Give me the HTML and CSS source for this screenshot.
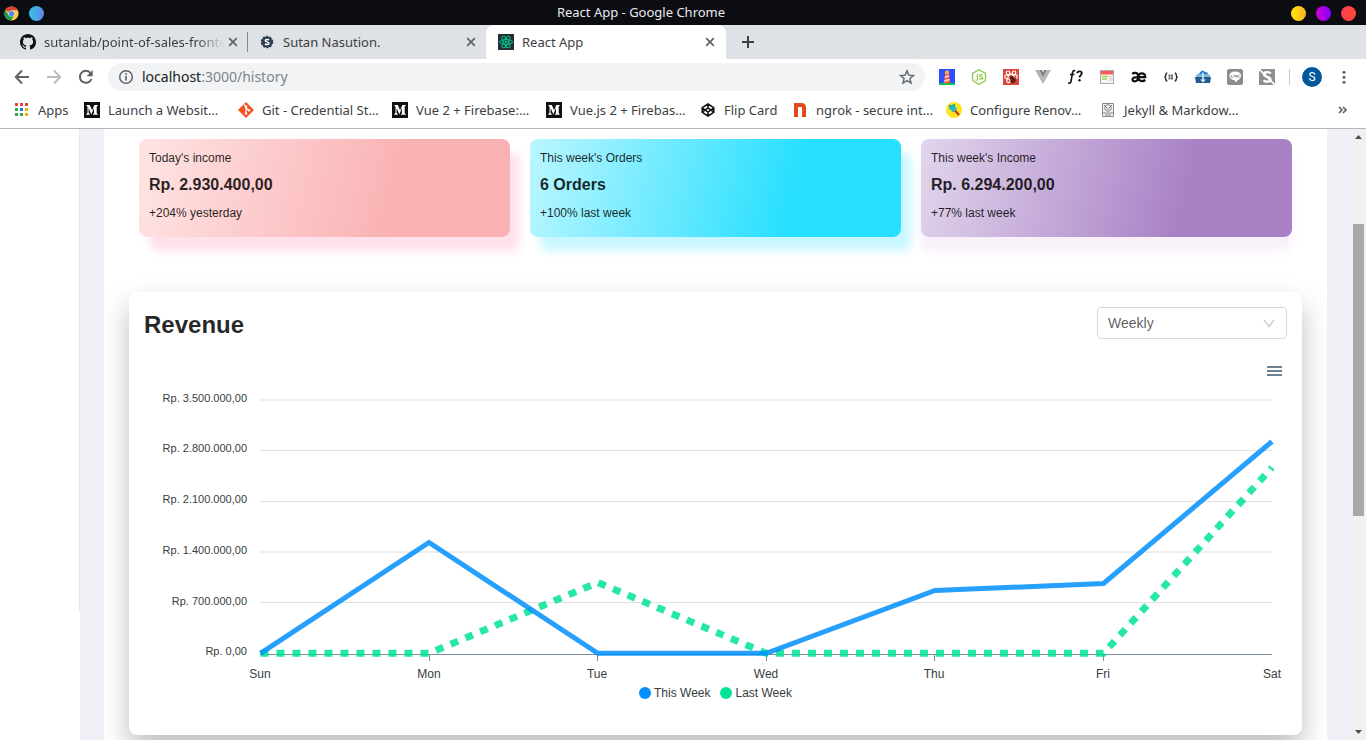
FILE: index.html
```html
<!DOCTYPE html>
<html lang="en">
<head>
<meta charset="utf-8">
<title>React App</title>
<link rel="stylesheet" href="styles.css">
</head>
<body>
<svg width="0" height="0" class="defs" aria-hidden="true">
  <defs>
    <symbol id="close" viewBox="0 0 10 10"><path d="M1.2 1.2l7.6 7.6M8.8 1.2L1.2 8.8" stroke="#5f6368" stroke-width="1.7"/></symbol>
    <symbol id="medium" viewBox="0 0 16 16"><rect width="16" height="16" fill="#111"/><path d="M2.500 3h3.300l2.300 5.200L10.400 3h3.300v.8l-1 .7v6.700l1 .8v.8H9v-.8l1-.8V6l-2.600 6.600L4.600 6v4.700l1.200 1.500v.6H2.300v-.6l1.200-1.500V4.800l-1-1z" fill="#fff"/></symbol>
  </defs>
</svg>

<header class="titlebar">
  <div class="title-side">
    <svg width="15" height="15" viewBox="0 0 16 16"><circle cx="8" cy="8" r="7.500" fill="#ffcd40"/><path d="M8 8L1.500 4.200A7.500 7.500 0 0 1 14.500 4.500H8z" fill="#de4032"/><path d="M1.500 4.200A7.500 7.500 0 0 0 7.500 15.500L11 9.700 5 9.800z" fill="#1a9c57"/><circle cx="8" cy="8" r="3.300" fill="#dfe9fb"/><circle cx="8" cy="8" r="2.800" fill="#4a8af4"/></svg>
    <span class="dot dot-blue"></span>
  </div>
  <div class="title-text">React App - Google Chrome</div>
  <div class="title-side title-right">
    <span class="dot dot-yellow"></span><span class="dot dot-purple"></span><span class="dot dot-red"></span>
  </div>
</header>

<nav class="tabs" aria-label="Tabs">
  <div class="tab">
    <svg width="16" height="16" viewBox="0 0 16 16"><path fill="#111" fill-rule="evenodd" d="M8 0C3.580 0 0 3.580 0 8c0 3.540 2.290 6.530 5.470 7.590.4.070.55-.17.55-.38 0-.19-.01-.82-.01-1.490-2.010.37-2.530-.49-2.690-.94-.09-.23-.48-.94-.82-1.130-.28-.15-.68-.52-.01-.53.63-.01 1.080.58 1.230.82.72 1.210 1.870.87 2.330.66.07-.52.28-.87.51-1.070-1.780-.2-3.640-.89-3.640-3.950 0-.87.31-1.590.82-2.150-.08-.2-.36-1.020.08-2.120 0 0 .67-.21 2.200.82.64-.18 1.320-.27 2-.27s1.360.09 2 .27c1.530-1.040 2.200-.82 2.200-.82.44 1.100.16 1.920.08 2.120.51.56.82 1.270.82 2.150 0 3.070-1.870 3.750-3.650 3.950.29.25.54.73.54 1.480 0 1.070-.01 1.930-.01 2.200 0 .21.15.46.55.38A8.010 8.010 0 0 0 16 8c0-4.420-3.580-8-8-8z"/></svg>
    <span class="tab-label fade">sutanlab/point-of-sales-fronte</span>
    <button class="tab-close" aria-label="Close tab"><svg width="10" height="10"><use href="#close"/></svg></button>
  </div>
  <div class="tab tab-second">
    <svg width="16" height="16" viewBox="0 0 16 16"><circle cx="8" cy="8" r="5.600" fill="#2c3e50"/><circle cx="8" cy="8" r="5.500" fill="none" stroke="#2c3e50" stroke-width="1.500" stroke-dasharray="2 1.500"/><path d="M10 6C9.200 5.200 6.300 5.100 6.300 6.600S10 7.700 10 9.300 7 10.900 5.900 9.900" fill="none" stroke="#fff" stroke-width="1.500"/></svg>
    <span class="tab-label">Sutan Nasution.</span>
    <button class="tab-close" aria-label="Close tab"><svg width="10" height="10"><use href="#close"/></svg></button>
  </div>
  <div class="tab tab-active">
    <svg width="16" height="16" viewBox="0 0 16 16"><rect width="16" height="16" fill="#272c35"/><g fill="none" stroke="#00c58e"><ellipse cx="8" cy="8" rx="6.500" ry="2.500"/><ellipse cx="8" cy="8" rx="6.500" ry="2.500" transform="rotate(60 8 8)"/><ellipse cx="8" cy="8" rx="6.500" ry="2.500" transform="rotate(120 8 8)"/></g><circle cx="8" cy="8" r="1.300" fill="#00c58e"/></svg>
    <span class="tab-label">React App</span>
    <button class="tab-close" aria-label="Close tab"><svg width="10" height="10"><use href="#close"/></svg></button>
  </div>
  <button class="new-tab" aria-label="New tab"><svg width="12" height="12" viewBox="0 0 12 12"><path d="M6 0v12M0 6h12" stroke="#3c4043" stroke-width="2"/></svg></button>
</nav>

<div class="toolbar">
  <button class="icon-btn" aria-label="Back"><svg width="16" height="16" viewBox="0 0 16 16"><path d="M15 8H2M8 1.500L1.800 8 8 14.500" fill="none" stroke="#5f6368" stroke-width="2"/></svg></button>
  <button class="icon-btn" aria-label="Forward"><svg width="16" height="16" viewBox="0 0 16 16"><path d="M1 8h13M8 1.500L14.200 8 8 14.500" fill="none" stroke="#babcbe" stroke-width="2"/></svg></button>
  <button class="icon-btn" aria-label="Reload"><svg width="16" height="16" viewBox="0 0 16 16"><path d="M13.500 10A6 6 0 1 1 12.600 4.100" fill="none" stroke="#5f6368" stroke-width="2"/><path d="M14.700 1v6.200H8.500z" fill="#5f6368"/></svg></button>
  <div class="omnibox">
    <svg width="16" height="16" viewBox="0 0 16 16"><circle cx="8" cy="8" r="6.300" fill="none" stroke="#5f6368" stroke-width="1.500"/><path d="M8 7v4.500M8 4.300V6" stroke="#5f6368" stroke-width="1.700"/></svg>
    <span class="url">localhost<span class="url-path">:3000/history</span></span>
    <button aria-label="Bookmark this page"><svg width="16" height="16" viewBox="0 0 16 16"><path d="M8 1.800l1.800 4.300 4.700.4-3.600 3 1.100 4.600-4-2.500-4 2.500 1.100-4.600-3.600-3 4.700-.4z" fill="none" stroke="#5f6368" stroke-width="1.400"/></svg></button>
  </div>
  <div class="extensions">
    <svg width="16" height="16" viewBox="0 0 16 16"><rect width="16" height="16" fill="#304ffe"/><path d="M0 14.500c5-1.500 11-1.500 16 0V16H0z" fill="#00c853"/><path d="M6 5h4l1 9.300H5z" fill="#ff5a3c"/><path d="M6 7l4-1v2L5.700 9zM5.500 11l5-1.300v1.800l-5.300 1.500z" fill="#ffd0c0"/><path d="M6 2.500L8 1l2 1.500V5H6z" fill="#ffab40"/></svg>
    <svg width="16" height="16" viewBox="0 0 16 16"><path d="M8 .8l6.500 3.700v7.200L8 15.300l-6.500-3.600V4.500z" fill="none" stroke="#8cc84b" stroke-width="1.300"/><path d="M6.500 5v5.200c0 1.200-1.500 1.400-2 .5M11.600 6.200c-.8-.8-3-.6-3 .6 0 1.500 3.200.6 3.200 2.200 0 1.300-2.600 1.400-3.400.3" fill="none" stroke="#8cc84b" stroke-width="1.200"/></svg>
    <svg width="16" height="16" viewBox="0 0 16 16"><rect width="16" height="16" fill="#db4437"/><g fill="none" stroke="#fff" stroke-width="1.200"><circle cx="5" cy="3.800" r="1.800"/><circle cx="11" cy="3.800" r="1.800"/><circle cx="3.500" cy="7.800" r="1.800"/><circle cx="12.500" cy="7.500" r="1.800"/><circle cx="5.500" cy="11.800" r="1.800"/><path d="M5.500 7c1-2.500 4-2.500 5 0"/></g><path d="M7 8.500l2.500-1.500 3.500 2.500-1 4-4 .5z" fill="#3a1712"/><path d="M8 10l3.500 3M10 8l2.500 3" stroke="#db4437" stroke-width=".7"/></svg>
    <svg width="16" height="16" viewBox="0 0 16 16"><path d="M0 1h4l4 7 4-7h4L8 15z" fill="#b4b4b4"/><path d="M4 1h2.800L8 3.200 9.200 1H12L8 8z" fill="#808080"/></svg>
    <svg width="16" height="16" viewBox="0 0 16 16"><path d="M8.200 1.800c-2-.8-2.600 1-3 3.400l-1 6.300c-.4 2.300-1.200 3-3 2.400M3 5.500h4.500" fill="none" stroke="#111" stroke-width="1.600"/><path d="M10.200 4.200c.2-2.500 4.600-2.600 4.600.1 0 2-2.300 2-2.300 4.200" fill="none" stroke="#111" stroke-width="1.800"/><circle cx="12.500" cy="11.200" r="1.200" fill="#111"/></svg>
    <svg width="16" height="16" viewBox="0 0 16 16"><rect x="1.500" y="1.500" width="13" height="13" fill="#f5f5f5" stroke="#aaa"/><path d="M2 2h12v3.500H2z" fill="#ff5a5f"/><path d="M3 7.500h6M3 10h5" stroke="#a4d63c" stroke-width="1.500"/><path d="M10 7h3.500v5H10z" fill="#ddd"/></svg>
    <svg width="16" height="16" viewBox="0 0 16 16"><path d="M1.200 4.800C3 3.300 7 3.200 7 6.500v3C7 12.500 1.500 13.500 1.500 10.500 1.500 8.500 4 8.200 7 8.200h7.300c.3-5-6.800-5-7 0 0 4.300 4.600 4.500 7 2.800" fill="none" stroke="#111" stroke-width="2.200"/></svg>
    <svg width="16" height="16" viewBox="0 0 16 16"><path d="M4.300 4c-1.500 0-1.500.5-1.500 1.800C2.800 7.200 2.600 7.800 1.500 8c1.100.2 1.300.8 1.300 2.200 0 1.300 0 1.800 1.500 1.800M11.700 4c1.500 0 1.500.5 1.500 1.800 0 1.400.2 2 1.300 2.200-1.100.2-1.300.8-1.300 2.200 0 1.300 0 1.800-1.500 1.800" fill="none" stroke="#222" stroke-width="1.400"/><path d="M5.500 6.200h5M5.500 8h5M5.500 9.800h5" stroke="#222" stroke-dasharray="2 .5"/></svg>
    <svg width="16" height="16" viewBox="0 0 16 16"><path d="M3 5.500L7 1.500l6 2.500v4H3z" fill="#1976d2"/><path d="M1 6l3-1.500 4 1 4-1L15 6v3H1z" fill="#7eb4dd"/><path d="M0 8h16l-1 6H1z" fill="#245b8f"/><path d="M7.200 3.500h1.600v7H11l-3 3-3-3h2.200z" fill="#d6ecfb"/></svg>
    <svg width="16" height="16" viewBox="0 0 16 16"><rect width="16" height="16" rx="2" fill="#8c8c8c"/><path d="M8 2.500c7.300 0 7.500 6 3 8.800L8 13.500v-2.200C.5 10.800 .5 2.500 8 2.500z" fill="#fff"/><path d="M4.300 6v2.300H6M7 5.800v2.500M8.300 8.300V6l1.500 2.300V5.800M12.500 6.100H11v2.200h1.500" fill="none" stroke="#8c8c8c" stroke-width=".8"/></svg>
    <svg width="16" height="16" viewBox="0 0 16 16"><rect width="16" height="16" fill="#8f8f91"/><path d="M11.800 4.500C10 2.500 5 2.800 5 5.500s6.500 2 6.500 4.700c0 3-5 3.200-7 1" fill="none" stroke="#fff" stroke-width="2.300"/><path d="M0 0l16 16" stroke="#fff" stroke-width="1.600"/></svg>
  </div>
  <span class="tool-divider"></span>
  <button class="avatar" aria-label="Profile">S</button>
  <button class="menu" aria-label="Menu"><svg width="16" height="16" viewBox="0 0 16 16" fill="#5f6368"><circle cx="8" cy="3.200" r="1.500"/><circle cx="8" cy="8.200" r="1.500"/><circle cx="8" cy="13.200" r="1.500"/></svg></button>
</div>

<nav class="bookmarks" aria-label="Bookmarks">
  <a href="#" class="bm bm-apps"><svg width="16" height="16" viewBox="0 0 16 16"><path d="M1 1h3v3H1zM6 1h3v3H6zM11 1h3v3h-3z" fill="#ea4335"/><path d="M1 6h3v3H1zM1 11h3v3H1zM6 11h3v3H6z" fill="#34a853"/><path d="M6 6h3v3H6z" fill="#1a73e8"/><path d="M11 6h3v3h-3zM11 11h3v3h-3z" fill="#fbaa05"/></svg>Apps</a>
  <a href="#" class="bm"><svg width="16" height="16"><use href="#medium"/></svg>Launch a Websit…</a>
  <a href="#" class="bm"><svg width="16" height="16" viewBox="0 0 16 16"><path d="M8 0l8 8-8 8-8-8z" fill="#f4511e"/><path d="M6 2.500l2 2v7M8 6l3 2.500" fill="none" stroke="#fff" stroke-width="1.200"/><circle cx="8" cy="4.800" r="1.300" fill="#fff"/><circle cx="8" cy="11.500" r="1.300" fill="#fff"/><circle cx="11" cy="8.300" r="1.300" fill="#fff"/></svg>Git - Credential St…</a>
  <a href="#" class="bm"><svg width="16" height="16"><use href="#medium"/></svg>Vue 2 + Firebase:…</a>
  <a href="#" class="bm"><svg width="16" height="16"><use href="#medium"/></svg>Vue.js 2 + Firebas…</a>
  <a href="#" class="bm bm-short"><svg width="16" height="16" viewBox="0 0 16 16"><path d="M8 2l5.800 3.700v4.600L8 14l-5.800-3.700V5.700zM8 2v4M8 10v4M2.200 5.800L8 10l5.800-4.200M2.200 10.200L8 6l5.800 4.200" fill="none" stroke="#111" stroke-width="1.500"/></svg>Flip Card</a>
  <a href="#" class="bm"><svg width="16" height="16" viewBox="0 0 16 16"><path d="M2 15V1h7.500C12.500 1 14 2.500 14 5.500V15h-4V5H6v10z" fill="#e04a1c"/></svg>ngrok - secure int…</a>
  <a href="#" class="bm"><svg width="16" height="16" viewBox="0 0 16 16"><circle cx="8" cy="8" r="8" fill="#ffe51f"/><path d="M2.500 6l4-4 4.500 4.500-4 4z" fill="#1cbcc4"/><path d="M3 3l2 2M9 2.500L7.500 4" stroke="#168b94" stroke-width="1.500"/><path d="M9 8.500l4 4.500" stroke="#c62828" stroke-width="2"/></svg>Configure Renov…</a>
  <a href="#" class="bm"><svg width="16" height="16" viewBox="0 0 16 16"><path d="M2.500 1.500h11v13h-11zM3 11h10" fill="#f3f3f3" stroke="#888"/><circle cx="8" cy="6" r="3.300" fill="none" stroke="#888"/><path d="M4 3l3 3M12 3L9 6M5 13h6M6.500 7h3" stroke="#888"/></svg>Jekyll &amp; Markdow…</a>
  <button class="overflow" aria-label="More bookmarks"><svg width="10" height="8" viewBox="0 0 10 8"><path d="M1 1l3 3-3 3M5 1l3 3-3 3" fill="none" stroke="#5f6368" stroke-width="1.700"/></svg></button>
</nav>

<div class="page">
  <aside class="sidebar"><div class="sidebar-inner"></div></aside>
  <main class="content">
    <section class="stats">
      <article class="stat stat-pink"><p>Today's income</p><h3>Rp. 2.930.400,00</h3><p>+204% yesterday</p></article>
      <article class="stat stat-cyan"><p>This week's Orders</p><h3>6 Orders</h3><p>+100% last week</p></article>
      <article class="stat stat-violet"><p>This week's Income</p><h3>Rp. 6.294.200,00</h3><p>+77% last week</p></article>
    </section>
    <section class="revenue">
      <div class="revenue-head">
        <h2>Revenue</h2>
        <div class="select-wrap">
          <select aria-label="Period"><option>Weekly</option><option>Monthly</option><option>Yearly</option></select>
          <svg class="select-arrow" width="12" height="12" viewBox="0 0 12 12"><path d="M1 2L6 8.500 11 2" fill="none" stroke="#bfbfbf" stroke-width="1.200"/></svg>
        </div>
      </div>
      <div class="chart">
        <button class="chart-menu" aria-label="Chart menu"><svg width="16" height="12" viewBox="0 0 16 12"><path d="M0 2h15M0 6h15M0 10h15" stroke="#6e8192" stroke-width="1.800"/></svg></button>
        <svg class="plot" viewBox="0 0 1143 329" role="img" aria-label="Revenue by day">
          <path d="M116 45h1012M116 197h1012" stroke="#eee" stroke-width="2"/>
          <path d="M116 95.500h1012M116 146.500h1012M116 247.500h1012" stroke="#e0e0e0"/>
          <path d="M116 299.500h1012" stroke="#78909c"/>
          <path d="M285.500 300v6M453.500 300v6M622.500 300v6M790.500 300v6M959.500 300v6" stroke="#78909c"/>
          <g class="y-labels">
            <text x="103" y="47">Rp. 3.500.000,00</text><text x="103" y="97">Rp. 2.800.000,00</text><text x="103" y="148">Rp. 2.100.000,00</text><text x="103" y="199">Rp. 1.400.000,00</text><text x="103" y="250">Rp. 700.000,00</text><text x="103" y="300">Rp. 0,00</text>
          </g>
          <g class="x-labels">
            <text x="116" y="323">Sun</text><text x="285" y="323">Mon</text><text x="453" y="323">Tue</text><text x="622" y="323">Wed</text><text x="790" y="323">Thu</text><text x="959" y="323">Fri</text><text x="1128" y="323">Sat</text>
          </g>
          <g fill="none" stroke-opacity=".85">
            <path d="M116.500 298.300H285L453.800 227.500 622.300 298.300H959.500L1128 112.500" stroke="#00e396" stroke-width="7" stroke-dasharray="8"/>
            <path d="M116.500 298.300L285 187.500 453.800 298.300H622.300L791 235.500 959.500 228.500 1128 86.500" stroke="#008ffb" stroke-width="5"/>
          </g>
        </svg>
        <div class="legend"><span class="key key-blue">This Week</span><span class="key key-green">Last Week</span></div>
      </div>
    </section>
  </main>
  <div class="scrollbar" aria-hidden="true">
    <svg width="15" height="16" viewBox="0 0 15 16"><path d="M4 10l3.500-4 3.500 4z" fill="#505050"/></svg>
    <div class="track"><div class="thumb"></div></div>
    <svg width="15" height="16" viewBox="0 0 15 16"><path d="M4 6l3.500 4L11 6z" fill="#505050"/></svg>
  </div>
</div>
</body>
</html>
```
FILE: styles.css
```css
* { box-sizing: border-box; }

body {
  margin: 0;
  height: 100vh;
  display: flex;
  flex-direction: column;
  overflow: hidden;
  background: #fff;
  font-family: "Liberation Sans", Arial, sans-serif;
}

svg { display: block; flex: none; }
.defs { position: absolute; }

button {
  border: 0;
  padding: 0;
  background: none;
  display: flex;
  align-items: center;
  justify-content: center;
  flex: none;
}

.titlebar, .tabs, .toolbar, .bookmarks {
  flex: none;
  display: flex;
  align-items: center;
  font-family: "Noto Sans", sans-serif;
  font-size: 13px;
  color: #3c4043;
  white-space: nowrap;
}

/* window title */
.titlebar { display: grid; grid-template-columns: 1fr auto 1fr; height: 25px; background: #0c0d12; padding: 2px 10px 0 4px; }
.title-side { display: flex; align-items: center; gap: 10px; }
.title-right { justify-content: flex-end; }
.title-text { color: #e8eaed; padding-bottom: 3px; margin-right: 78px; }
.dot { width: 15px; height: 15px; border-radius: 50%; }
.dot-blue { background: linear-gradient(90deg, #36c5e0, #5f86ee); }
.dot-yellow { background: linear-gradient(90deg, #ffe600, #ffb22e); }
.dot-purple { background: linear-gradient(90deg, #cf00d0, #8600ff); }
.dot-red { background: linear-gradient(90deg, #ff3a5e, #ff4b2b); }

/* tab strip */
.tabs { height: 34px; background: #dee1e6; padding-left: 8px; }
.tab {
  height: 34px;
  width: 240px;
  display: flex;
  align-items: center;
  gap: 8px;
  padding: 0 10px 0 12px;
  position: relative;
}
.tab-label { flex: 1; }
.fade { margin-right: -8px; -webkit-mask-image: linear-gradient(90deg, #000 84%, transparent 98%); mask-image: linear-gradient(90deg, #000 84%, transparent 98%); }
.tab-close { width: 12px; height: 16px; }
.tab-second { width: 238px; padding-right: 9px; padding-left: 11px; }
.tab-second::before { content: ""; position: absolute; left: -1px; top: 7px; height: 20px; width: 1px; background: #85898e; }
.tab-active { background: #fff; border-radius: 8px 8px 0 0; }
.new-tab { width: 28px; height: 28px; margin-left: 8px; }

/* toolbar */
.toolbar { height: 36px; padding: 0 14px; }
.icon-btn { width: 16px; height: 28px; margin-right: 16px; }
.omnibox {
  flex: 1;
  height: 28px;
  margin-left: -2px;
  border-radius: 14px;
  background: #f1f3f4;
  display: flex;
  align-items: center;
  gap: 8px;
  padding: 0 10px;
}
.url { flex: 1; padding-bottom: 2px; font-size: 14px; color: #202124; }
.url-path { color: #80868b; }
.extensions { display: flex; gap: 16px; margin-left: 14px; }
.tool-divider { width: 1px; height: 16px; background: #c8cacd; margin: 0 12px 0 14px; }
.avatar { width: 20px; height: 20px; border-radius: 50%; background: #01579b; color: #fff; font-family: Roboto, sans-serif; font-size: 12px; }
.menu { margin-left: 14px; }

/* bookmarks */
.bookmarks { height: 34px; padding: 0 18px 4px 14px; border-bottom: 1px solid #b6b6b8; }
.bm { width: 154px; display: flex; align-items: center; gap: 8px; color: inherit; text-decoration: none; }
.bm-apps { width: 70px; }
.bm-short { width: 92px; }
.overflow { margin-left: auto; }

/* page */
.page { flex: 1; min-height: 0; display: flex; background: #f0f1f6; }
.sidebar { width: 80px; flex: none; background: #fff; }
.sidebar-inner { height: 79%; border-right: 1px solid #e8e8e8; }
.content { flex: 1; min-width: 0; margin: 0 24px; padding: 10px 25px; background: #fff; overflow: hidden; color: rgba(0, 0, 0, .85); }

.stats { display: grid; grid-template-columns: repeat(3, 1fr); gap: 20px; padding: 0 10px; }
.stat { height: 98px; border-radius: 8px; padding: 10px; font-size: 12px; }
.stat p, .stat h3 { margin: 0; }
.stat p { line-height: 18px; }
.stat h3 { font-size: 16px; line-height: 26px; margin: 5px 0 6px; }
.stat-pink { background: linear-gradient(103deg, #fee4e4, #fab1b3 70%); box-shadow: 10px 14px 10px #ffe1eb; }
.stat-cyan { background: linear-gradient(103deg, #bbf6ff, #28dfff 70%); box-shadow: 10px 14px 10px #c8f7ff; }
.stat-violet { background: linear-gradient(103deg, #e1d5ec, #a982c6 70%); box-shadow: 0 14px 10px #f9f0fa; }

.revenue { margin-top: 55px; padding: 15px; border-radius: 8px; background: #fff; box-shadow: 0 14px 28px rgba(0, 0, 0, .26); }
.revenue-head { display: flex; justify-content: space-between; align-items: center; height: 32px; }
.revenue h2 { margin: 0; padding-top: 4px; font-size: 24px; line-height: 32px; }
.select-wrap { position: relative; width: 190px; }
select {
  appearance: none;
  width: 100%;
  height: 32px;
  padding: 0 30px 0 10px;
  border: 1px solid #d9d9d9;
  border-radius: 4px;
  background: #fff;
  color: rgba(0, 0, 0, .65);
  font: 14px "Liberation Sans", Arial, sans-serif;
}
.select-arrow { position: absolute; right: 12px; top: 11px; pointer-events: none; }

.chart { position: relative; margin-top: 16px; padding-bottom: 18px; }
.chart-menu { position: absolute; right: 4px; top: 10px; }
.plot { width: 100%; height: auto; overflow: visible; fill: #373d3f; }
.y-labels { font-size: 11px; text-anchor: end; }
.x-labels { font-size: 12px; text-anchor: middle; }
.legend { display: flex; justify-content: center; gap: 10px; font-size: 12px; line-height: 18px; color: #373d3f; }
.key { display: flex; align-items: center; gap: 3px; }
.key::before { content: ""; width: 12px; height: 12px; border-radius: 50%; }
.key-blue::before { background: #008ffb; }
.key-green::before { background: #00e396; }

.scrollbar { width: 15px; flex: none; display: flex; flex-direction: column; background: #f1f1f1; }
.track { flex: 1; padding: 0 2px; display: flex; flex-direction: column; }
.track::before { content: ""; flex: 79; }
.track::after { content: ""; flex: 208; }
.thumb { flex: 292; background: #a8a8a8; }
```
